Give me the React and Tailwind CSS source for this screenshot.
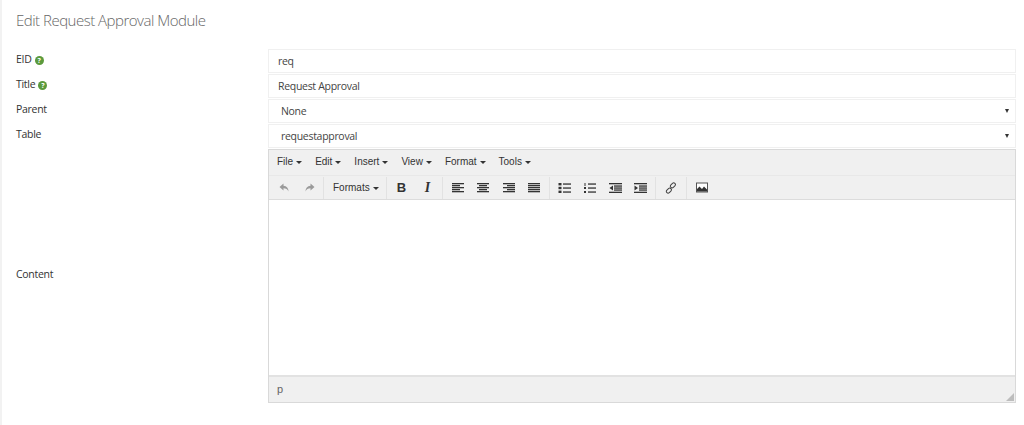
import React from "react";

const menus = ["File", "Edit", "Insert", "View", "Format", "Tools"];

function Caret() {
  return <span className="inline-block ml-[3px] align-middle w-0 h-0 border-x-[3px] border-x-transparent border-t-[3px] border-t-[#333]" />;
}

function Help() {
  return (
    <span className="ml-[3px] inline-flex items-center justify-center w-[9px] h-[9px] rounded-full bg-[#5b9a3c] text-white text-[7px] font-bold leading-none">
      ?
    </span>
  );
}

function Lines({ rows }) {
  return (
    <svg width="14" height="12" viewBox="0 0 14 12" fill="#333">
      {rows.map(([x, w], i) => (
        <rect key={i} x={x} y={i * 2 + 1} width={w} height="1.3" />
      ))}
    </svg>
  );
}

const alignLeft = [[1, 12], [1, 8], [1, 12], [1, 8], [1, 12]];
const alignCenter = [[1, 12], [3, 8], [1, 12], [3, 8], [1, 12]];
const alignRight = [[1, 12], [5, 8], [1, 12], [5, 8], [1, 12]];
const alignFull = [[1, 12], [1, 12], [1, 12], [1, 12], [1, 12]];

function Bullets() {
  return (
    <svg width="13" height="12" viewBox="0 0 13 12" fill="#333">
      <rect x="0.5" y="1" width="3" height="2.4" />
      <rect x="0.5" y="4.8" width="3" height="2.4" />
      <rect x="0.5" y="8.6" width="3" height="2.4" />
      <rect x="5" y="1.4" width="8" height="1.3" />
      <rect x="5" y="5.4" width="8" height="1.3" />
      <rect x="5" y="9.4" width="8" height="1.3" />
    </svg>
  );
}

function Numbers() {
  return (
    <svg width="13" height="12" viewBox="0 0 13 12" fill="#333">
      <rect x="1.5" y="1" width="1" height="3" />
      <rect x="1" y="5" width="2" height="2" />
      <rect x="1" y="9" width="2" height="2" />
      <rect x="5" y="1.4" width="8" height="1.3" />
      <rect x="5" y="5.4" width="8" height="1.3" />
      <rect x="5" y="9.4" width="8" height="1.3" />
    </svg>
  );
}

function Outdent() {
  return (
    <svg width="13" height="12" viewBox="0 0 13 12" fill="#333">
      <rect x="0" y="1" width="13" height="1.3" />
      <rect x="5" y="3.4" width="8" height="1.3" />
      <rect x="5" y="5.4" width="8" height="1.3" />
      <rect x="5" y="7.4" width="8" height="1.3" />
      <rect x="0" y="9.7" width="13" height="1.3" />
      <path d="M4 3.5v5L0.5 6z" />
    </svg>
  );
}

function Indent() {
  return (
    <svg width="13" height="12" viewBox="0 0 13 12" fill="#333">
      <rect x="0" y="1" width="13" height="1.3" />
      <rect x="5" y="3.4" width="8" height="1.3" />
      <rect x="5" y="5.4" width="8" height="1.3" />
      <rect x="5" y="7.4" width="8" height="1.3" />
      <rect x="0" y="9.7" width="13" height="1.3" />
      <path d="M0.5 3.5v5L4 6z" />
    </svg>
  );
}

function LinkIcon() {
  return (
    <svg width="12" height="12" viewBox="0 0 12 12" fill="none" stroke="#444" strokeWidth="1">
      <rect x="6.2" y="0.6" width="3.4" height="5.6" rx="1.7" transform="rotate(45 7.9 3.4)" />
      <rect x="2.2" y="5.8" width="3.4" height="5.6" rx="1.7" transform="rotate(45 3.9 8.6)" />
    </svg>
  );
}

function ImageIcon() {
  return (
    <svg width="12" height="11" viewBox="0 0 12 11">
      <rect x="0.5" y="1" width="11" height="9" fill="#fff" stroke="#555" />
      <path d="M1 9.5V7l2.5-2.5L6 7l2-2.5 3 3v2z" fill="#333" />
    </svg>
  );
}

function ArrowBack({ flip }) {
  return (
    <svg width="11" height="10" viewBox="0 0 11 10" fill="#9a9a9a" className={flip ? "-scale-x-100" : ""}>
      <path d="M4.5 0.5 0.5 4l4 3.5V5.3c2.5 0 4 .8 5 3.2 0-3.5-1.8-5.6-5-5.8z" />
    </svg>
  );
}

function Sep() {
  return <div className="w-px h-[22px] bg-[#e2e2e2]" />;
}

function Tool({ children, w = "w-[25.5px]" }) {
  return <div className={`${w} flex items-center justify-center`}>{children}</div>;
}

function Field({ label, help, children }) {
  return (
    <div className="flex">
      <div className="w-[252px] shrink-0 pt-[2px] text-[10.5px] tracking-[-0.3px] leading-[16px] text-[#333]">
        {label}
        {help && <Help />}
      </div>
      {children}
    </div>
  );
}

function TextBox({ value }) {
  return (
    <div className="w-[748px] h-[24px] mb-px border border-[#f0f0f0] pl-[9px] text-[10.5px] tracking-[-0.3px] leading-[23px] text-[#444] bg-white">
      {value}
    </div>
  );
}

function SelectBox({ value }) {
  return (
    <div className="w-[748px] h-[24px] mb-px border border-[#f0f0f0] pl-[12px] pr-[6px] flex items-center justify-between text-[10.5px] tracking-[-0.3px] text-[#444] bg-white">
      <span className="pt-[2px]">{value}</span>
      <span className="w-0 h-0 border-x-[2.5px] border-x-transparent border-t-[4px] border-t-[#333]" />
    </div>
  );
}

export default function App() {
  return (
    <div className="w-[1024px] h-[425px] overflow-hidden bg-white border-l-2 border-[#f2f2f2] pl-[14px] font-['Open_Sans',sans-serif]">
      <h1 className="pt-[10px] h-[49px] text-[15px] tracking-[-0.5px] leading-[20px] font-light text-[#666]">Edit Request Approval Module</h1>

      <Field label="EID" help>
        <TextBox value="req" />
      </Field>
      <Field label="Title" help>
        <TextBox value="Request Approval" />
      </Field>
      <Field label="Parent">
        <SelectBox value="None" />
      </Field>
      <Field label="Table">
        <SelectBox value="requestapproval" />
      </Field>

      <div className="flex items-center">
        <div className="w-[252px] shrink-0 pb-[3px] text-[10.5px] tracking-[-0.3px] text-[#333]">Content</div>
        <div className="w-[748px] h-[254px] border border-[#d9d9d9] bg-white flex flex-col font-['Liberation_Sans',sans-serif]">
          <div className="h-[25px] pb-[2px] bg-[#f0f0f0] flex items-center pl-[8px] gap-[13px] text-[10px] text-[#333]">
            {menus.map((m) => (
              <span key={m}>
                {m}
                <Caret />
              </span>
            ))}
          </div>
          <div className="h-[24px] bg-[#f0f0f0] border-t border-[#e8e8e8] flex items-center text-[10px] text-[#333]">
            <div className="w-[54px] pl-[10px] flex gap-[14px]">
              <ArrowBack />
              <ArrowBack flip />
            </div>
            <Sep />
            <div className="w-[62px] pl-[9px]">
              Formats
              <Caret />
            </div>
            <Sep />
            <div className="w-[55px] flex justify-center">
              <Tool w="w-[26px]"><span className="text-[13px] font-bold">B</span></Tool>
              <Tool w="w-[26px]"><span className="text-[14px] italic font-bold font-['Liberation_Serif',serif]">I</span></Tool>
            </div>
            <Sep />
            <div className="w-[106px] flex justify-center">
              <Tool><Lines rows={alignLeft} /></Tool>
              <Tool><Lines rows={alignCenter} /></Tool>
              <Tool><Lines rows={alignRight} /></Tool>
              <Tool><Lines rows={alignFull} /></Tool>
            </div>
            <Sep />
            <div className="w-[105px] flex justify-center">
              <Tool><Bullets /></Tool>
              <Tool><Numbers /></Tool>
              <Tool><Outdent /></Tool>
              <Tool><Indent /></Tool>
            </div>
            <Sep />
            <Tool w="w-[30px]"><LinkIcon /></Tool>
            <Sep />
            <Tool w="w-[30px]"><ImageIcon /></Tool>
          </div>
          <div className="flex-1 border-t border-[#dcdcdc] bg-white" />
          <div className="relative h-[27px] bg-[#f0f0f0] border-t-2 border-[#e2e2e2] pl-[8px] text-[11px] leading-[24px] text-[#666]">
            p
            <svg width="8" height="8" viewBox="0 0 8 8" className="absolute right-px bottom-px" fill="#bdbdbd">
              <path d="M8 0v8H0z" />
            </svg>
          </div>
        </div>
      </div>
    </div>
  );
}
